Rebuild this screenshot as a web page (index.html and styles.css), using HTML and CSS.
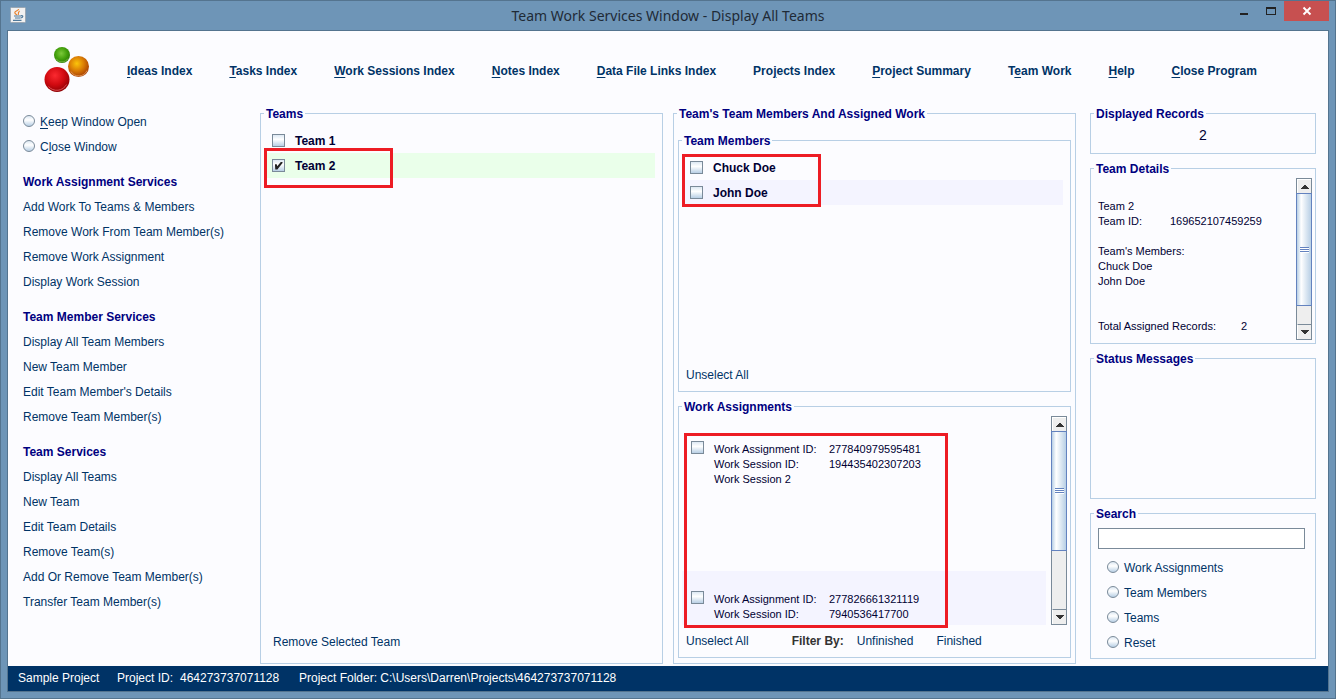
FILE: index.html
```html
<!DOCTYPE html>
<html lang="en">
<head>
<meta charset="utf-8">
<title>Team Work Services Window - Display All Teams</title>
<link rel="stylesheet" href="styles.css">
</head>
<body>
<div class="window">
  <header class="titlebar">
    <svg class="app-icon" viewBox="0 0 16 16" aria-hidden="true">
      <rect x="0.5" y="0.5" width="15" height="15" rx="1" fill="#f1f1f1" stroke="#9aa7b3"/>
      <path d="M8.6 2C9 4-.2 4.400 6.800 8M9.600 4.200C7.500 5.300 7.800 6 8.300 7.800" transform="translate(1 0) scale(.9 1)" fill="none" stroke="#e8822e" stroke-width="1.300"/>
      <path d="M4 9h7M5 11h5.500M11 8.800c2.400-.6 2.400 1.700-.2 2.200M3 13.300h8.500" fill="none" stroke="#4f7a9c" stroke-width="1.200"/>
    </svg>
    <h1 class="title">Team Work Services Window - Display All Teams</h1>
    <div class="window-buttons">
      <button class="win-btn" aria-label="Minimize"><svg class="glyph" viewBox="0 0 12 10"><rect x="2" y="7" width="8" height="2" fill="#222"/></svg></button>
      <button class="win-btn" aria-label="Maximize"><svg class="glyph" viewBox="0 0 12 10"><path d="M1 1h10v8H1zM2 3v5h8V3z" fill="#222" fill-rule="evenodd"/></svg></button>
      <button class="win-btn win-close" aria-label="Close"><svg class="glyph" viewBox="0 0 12 10"><path d="M2.500 1.500L9.500 8.500M9.500 1.500L2.500 8.500" stroke="#fff" stroke-width="1.900"/></svg></button>
    </div>
  </header>

  <div class="client">
    <nav class="menu">
      <svg class="logo" viewBox="0 0 46 48" aria-hidden="true">
        <defs>
          <radialGradient id="green" cx=".45" cy=".4" r=".6"><stop offset="0" stop-color="#7cc93a"/><stop offset=".6" stop-color="#43a00c"/><stop offset="1" stop-color="#2c7a05"/></radialGradient>
          <radialGradient id="orange" cx=".42" cy=".36" r=".64"><stop offset="0" stop-color="#fbc50a"/><stop offset=".5" stop-color="#dd8106"/><stop offset="1" stop-color="#a83f02"/></radialGradient>
          <radialGradient id="red" cx=".42" cy=".34" r=".68"><stop offset="0" stop-color="#fb2a30"/><stop offset=".55" stop-color="#d10a10"/><stop offset="1" stop-color="#8c0104"/></radialGradient>
        </defs>
        <circle cx="18" cy="8" r="8" fill="url(#green)"/>
        <path d="M12 11.500a7 7 0 0 0 12 0" fill="none" stroke="#8ccb55" stroke-width=".7"/>
        <circle cx="34.500" cy="19.500" r="10.500" fill="url(#orange)"/>
        <path d="M27 24.500a9 9 0 0 0 16-1" fill="none" stroke="#e7a468" stroke-width=".8"/>
        <circle cx="13" cy="32.500" r="12.500" fill="url(#red)"/>
        <path d="M4.500 39.500a11 11 0 0 0 18-2" fill="none" stroke="#e86668" stroke-width=".8"/>
      </svg>
      <div class="menu-links">
        <a href="#"><u>I</u>deas Index</a>
        <a href="#"><u>T</u>asks Index</a>
        <a href="#"><u>W</u>ork Sessions Index</a>
        <a href="#"><u>N</u>otes Index</a>
        <a href="#"><u>D</u>ata File Links Index</a>
        <a href="#">Pro<u>j</u>ects Index</a>
        <a href="#"><u>P</u>roject Summary</a>
        <a href="#">T<u>e</u>am Work</a>
        <a href="#"><u>H</u>elp</a>
        <a href="#"><u>C</u>lose Program</a>
      </div>
    </nav>

    <main class="main">
      <aside class="sidebar">
        <div class="group">
          <label class="option"><input class="radio" type="radio" name="mode"><span><u>K</u>eep Window Open</span></label>
          <label class="option"><input class="radio" type="radio" name="mode"><span>C<u>l</u>ose Window</span></label>
        </div>
        <div class="group">
          <h2 class="heading">Work Assignment Services</h2>
          <button class="action">Add Work To Teams &amp; Members</button>
          <button class="action">Remove Work From Team Member(s)</button>
          <button class="action">Remove Work Assignment</button>
          <button class="action">Display Work Session</button>
        </div>
        <div class="group">
          <h2 class="heading">Team Member Services</h2>
          <button class="action">Display All Team Members</button>
          <button class="action">New Team Member</button>
          <button class="action">Edit Team Member's Details</button>
          <button class="action">Remove Team Member(s)</button>
        </div>
        <div class="group">
          <h2 class="heading">Team Services</h2>
          <button class="action">Display All Teams</button>
          <button class="action">New Team</button>
          <button class="action">Edit Team Details</button>
          <button class="action">Remove Team(s)</button>
          <button class="action">Add Or Remove Team Member(s)</button>
          <button class="action">Transfer Team Member(s)</button>
        </div>
      </aside>

      <fieldset class="panel teams">
        <legend>Teams</legend>
        <div class="list">
          <label class="row"><input class="check" type="checkbox"><span>Team 1</span></label>
          <label class="row row-selected"><input class="check" type="checkbox" checked><span>Team 2</span><i class="mark mark-team"></i></label>
        </div>
        <div class="panel-footer"><button class="action">Remove Selected Team</button></div>
      </fieldset>

      <fieldset class="panel work">
        <legend>Team's Team Members And Assigned Work</legend>
        <div class="work-body">
          <fieldset class="panel members">
            <legend>Team Members</legend>
            <div class="list">
              <label class="row"><input class="check" type="checkbox"><span>Chuck Doe</span></label>
              <label class="row row-alt"><input class="check" type="checkbox"><span>John Doe</span></label>
              <i class="mark mark-members"></i>
            </div>
            <div class="panel-footer"><button class="action">Unselect All</button></div>
          </fieldset>
          <fieldset class="panel assignments">
            <legend>Work Assignments</legend>
            <div class="scroll-area">
              <div class="records">
                <div class="record">
                  <input class="check" type="checkbox" id="rec1">
                  <label class="fields" for="rec1"><span>Work Assignment ID:</span><span>277840979595481</span><span>Work Session ID:</span><span>194435402307203</span><span>Work Session 2</span></label>
                </div>
                <div class="record row-alt">
                  <input class="check" type="checkbox" id="rec2">
                  <label class="fields" for="rec2"><span>Work Assignment ID:</span><span>277826661321119</span><span>Work Session ID:</span><span>7940536417700</span></label>
                </div>
              </div>
              <div class="scrollbar">
                <button class="arrow" aria-label="Scroll up"><svg viewBox="0 0 8 4"><path d="M0 4V3h1V2h1V1h1V0h2v1h1v1h1v1h1v1z"/></svg></button>
                <div class="track"><div class="thumb"><i class="grip"></i></div></div>
                <button class="arrow" aria-label="Scroll down"><svg viewBox="0 0 8 4"><path d="M0 0v1h1v1h1v1h1v1h2V3h1V2h1V1h1V0z"/></svg></button>
              </div>
              <i class="mark mark-records"></i>
            </div>
            <div class="panel-footer filter">
              <button class="action">Unselect All</button>
              <strong>Filter By:</strong>
              <button class="action">Unfinished</button>
              <button class="action">Finished</button>
            </div>
          </fieldset>
        </div>
      </fieldset>

      <div class="info">
        <fieldset class="panel count">
          <legend>Displayed Records</legend>
          <output class="count-value">2</output>
        </fieldset>
        <fieldset class="panel details">
          <legend>Team Details</legend>
          <div class="details-body">
            <div class="details-text">
              <p>Team 2</p>
              <p class="pair"><span>Team ID:</span><span>169652107459259</span></p>
              <p class="block">Team's Members:</p>
              <p>Chuck Doe</p>
              <p>John Doe</p>
              <p class="total"><span>Total Assigned Records:</span><span>2</span></p>
            </div>
            <div class="scrollbar">
              <button class="arrow" aria-label="Scroll up"><svg viewBox="0 0 8 4"><path d="M0 4V3h1V2h1V1h1V0h2v1h1v1h1v1h1v1z"/></svg></button>
              <div class="track"><div class="thumb thumb-long"><i class="grip"></i></div></div>
              <button class="arrow" aria-label="Scroll down"><svg viewBox="0 0 8 4"><path d="M0 0v1h1v1h1v1h1v1h2V3h1V2h1V1h1V0z"/></svg></button>
            </div>
          </div>
        </fieldset>
        <fieldset class="panel status">
          <legend>Status Messages</legend>
        </fieldset>
        <fieldset class="panel search">
          <legend>Search</legend>
          <input class="search-box" type="text" aria-label="Search">
          <div class="search-options">
            <label class="option"><input class="radio" type="radio" name="scope"><span>Work Assignments</span></label>
            <label class="option"><input class="radio" type="radio" name="scope"><span>Team Members</span></label>
            <label class="option"><input class="radio" type="radio" name="scope"><span>Teams</span></label>
            <label class="option"><input class="radio" type="radio" name="scope"><span>Reset</span></label>
          </div>
        </fieldset>
      </div>
    </main>

    <footer class="statusbar">
      <span>Sample Project</span>
      <span class="project-id"><span>Project ID:</span><span>464273737071128</span></span>
      <span>Project Folder: C:\Users\Darren\Projects\464273737071128</span>
    </footer>
  </div>
</div>
</body>
</html>
```
FILE: styles.css
```css
* { box-sizing: border-box; }

body {
  margin: 0;
  font: 12px/15px "Liberation Sans", Arial, sans-serif;
  color: #003366;
}

button, input {
  font: inherit;
  color: inherit;
  margin: 0;
}

button {
  padding: 0;
  border: 0;
  background: none;
  text-align: left;
}

h1, h2, p { margin: 0; font-weight: normal; }

u { text-underline-offset: 2px; text-decoration-thickness: 1px; }

/* Window frame */
.window {
  display: flex;
  flex-direction: column;
  min-height: 100vh;
  padding: 0 6px 6px;
  border: 1px solid #54748f;
  background: #6e95b7;
}

.titlebar {
  display: grid;
  grid-template-columns: 1fr auto 1fr;
  height: 29px;
}

.app-icon { width: 16px; height: 16px; margin: 6px 0 0 3px; }

.title {
  font: 14px/29px "Noto Sans", "Open Sans", sans-serif;
  color: #1f2a36;
}

.window-buttons {
  display: flex;
  justify-content: flex-end;
  align-items: flex-start;
}

.win-btn {
  display: flex;
  justify-content: center;
  align-items: center;
  width: 27px;
  height: 20px;
}

.win-close { width: 45px; background: #c75050; }

.glyph { width: 12px; height: 10px; }

.client {
  display: flex;
  flex: 1;
  flex-direction: column;
  border: 1px solid #54748f;
  background: #fcfcff;
}

/* Menu */
.menu {
  display: flex;
  align-items: center;
  height: 76px;
  padding: 4px 0 0 36px;
}

.logo { flex: none; width: 46px; height: 48px; }

.menu-links {
  display: flex;
  gap: 37px;
  margin-left: 37px;
  white-space: nowrap;
}

.menu-links a {
  color: #003366;
  font-weight: bold;
  text-decoration: none;
}

/* Columns */
.main {
  display: flex;
  flex: 1;
  padding: 0 12px 2px 0;
}

.sidebar {
  display: flex;
  flex: none;
  flex-direction: column;
  gap: 10px;
  width: 252px;
  padding: 2px 0 0 15px;
}

.group { display: flex; flex-direction: column; align-items: flex-start; }

.heading, legend {
  color: #000080;
  font-size: 12px;
  font-weight: bold;
}

.heading, .action { padding-top: 2px; line-height: 23px; }

.option { display: flex; align-items: center; gap: 5px; height: 25px; padding-bottom: 1px; }
.option span { padding-top: 3px; }

.radio, .check {
  flex: none;
  appearance: none;
  width: 12px;
  height: 12px;
  border: 1px solid #7a8a99;
  border-radius: 50%;
  background: linear-gradient(#dde8f3, #fff 40%, #b8cfe5);
}

.check {
  display: grid;
  place-items: center;
  width: 13px;
  height: 13px;
  border-radius: 0;
}

.check:checked::after {
  content: "";
  width: 8px;
  height: 8px;
  background: #222;
  clip-path: polygon(5% 35%, 28% 35%, 34% 60%, 84% 0, 100% 0, 100% 18%, 36% 100%, 10% 100%);
}

/* Titled panels */
.panel {
  display: flex;
  flex-direction: column;
  min-width: 0;
  margin: 0;
  padding: 0;
  border: 1px solid #b8cfe5;
}

legend { margin-left: 3px; padding: 1px 2px 0; line-height: 12px; }

.teams { flex: 1; margin-right: 10px; }
.work { flex: 1; margin-right: 14px; }

.list { position: relative; flex: 1; padding: 8px 7px 0 3px; }

.row {
  position: relative;
  display: flex;
  align-items: center;
  gap: 10px;
  height: 25px;
  padding-left: 8px;
  color: #000033;
  font-weight: bold;
}

.row span { padding-top: 2px; }

.row-selected { background: #eaffea; }
.row-alt { background: #f4f4ff; }

.panel-footer { padding: 0 7px 4px; }

.teams .panel-footer { padding: 0 12px 9px; }

.work-body {
  display: flex;
  flex: 1;
  flex-direction: column;
  gap: 8px;
  padding: 14px 4px 5px;
}

.members, .assignments { flex: 1 1 0; }

/* Red call-out frames */
.mark { position: absolute; border: 3px solid #ed1c24; pointer-events: none; }
.mark-team { left: 0; top: -5px; width: 129px; height: 40px; }
.mark-members { left: 3px; top: 7px; width: 139px; height: 53px; }
.mark-records { left: 2px; top: 17px; width: 264px; height: 195px; }

/* Work assignment records */
.scroll-area { position: relative; display: flex; gap: 5px; margin: 3px 3px 0; height: 209px; }

.records { flex: 1; overflow: hidden; padding-top: 5px; }

.record { display: flex; gap: 10px; height: 150px; padding: 20px 0 0 9px; }

.fields {
  display: grid;
  grid-template-columns: 115px auto;
  align-content: start;
  padding-top: 1px;
  color: #000033;
  font-size: 11px;
}

.assignments .panel-footer { margin-top: 3px; }
.filter { display: flex; }
.filter strong { margin: 0 13px 0 43px; padding-top: 2px; color: #333; line-height: 23px; }
.filter .action + .action { margin-left: 23px; }

/* Scroll bars */
.scrollbar {
  display: flex;
  flex: none;
  flex-direction: column;
  width: 16px;
  border: 1px solid #7a8a99;
  background: #eee;
}

.arrow {
  display: grid;
  place-items: center;
  height: 14px;
  border: 1px solid #fff;
  border-width: 1px 0 0 1px;
}

.arrow svg { width: 8px; height: 4px; fill: #333; }

.arrow:last-child { border-top-color: #7a8a99; height: 15px; }

.track { flex: 1; }

.thumb {
  display: grid;
  place-items: center;
  height: 120px;
  margin: 0 -1px;
  border: 1px solid #6382bf;
  background: linear-gradient(90deg, #b8cfe5, #fff 30%, #b8cfe5);
}

.thumb-long { height: 113px; }

.grip {
  width: 9px;
  height: 6px;
  background: repeating-linear-gradient(#6382bf 0 1px, #fff 1px 2px);
}

/* Right column */
.info { display: flex; flex: none; flex-direction: column; gap: 8px; width: 226px; padding-bottom: 5px; }

.count { height: 47px; }
.count-value { color: #000033; font-size: 14px; line-height: 30px; text-align: center; }

.details { height: 182px; }
.details-body { display: flex; margin: 3px 3px 0 7px; height: 162px; }
.details-text { flex: 1; padding-top: 21px; color: #000033; font-size: 11px; }
.pair { display: grid; grid-template-columns: 72px auto; }
.block { margin-top: 15px; }
.total { display: flex; gap: 25px; margin-top: 30px; }

.status { flex: 1; }

.search { height: 152px; }

.search-box {
  height: 21px;
  margin: 8px 10px 6px 7px;
  padding: 0 3px;
  border: 1px solid #7a8a99;
  background: #fff;
}

.search-options { padding-left: 16px; }

/* Status bar */
.statusbar {
  display: grid;
  grid-template-columns: 99px 182px auto;
  padding: 0 10px;
  background: #003366;
  color: #fff;
  line-height: 25px;
}

.project-id { display: grid; grid-template-columns: 63px auto; }
```
